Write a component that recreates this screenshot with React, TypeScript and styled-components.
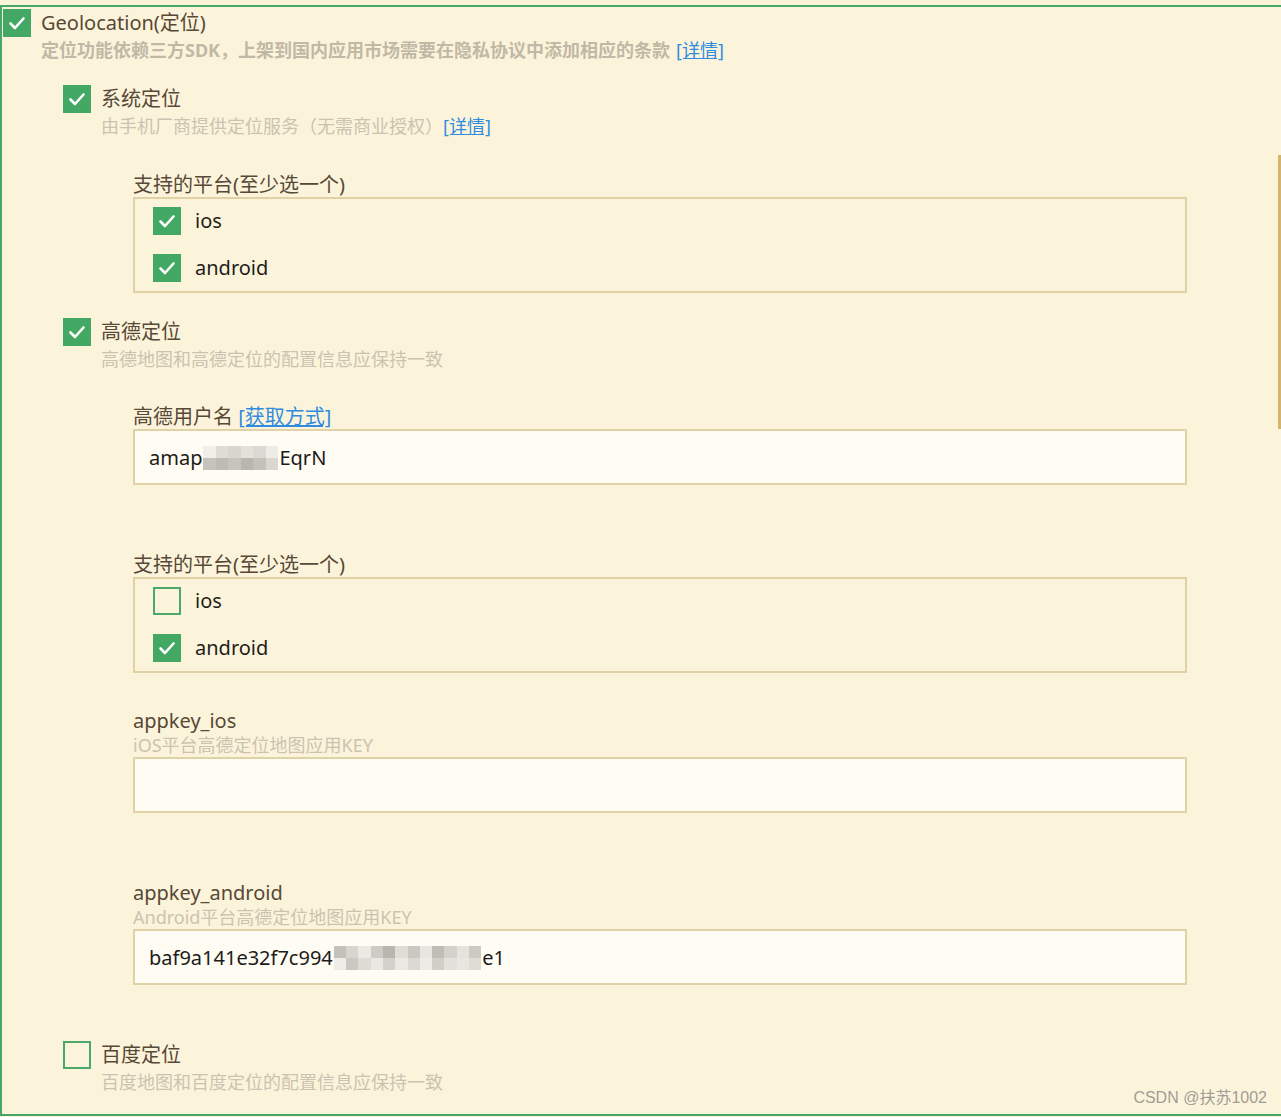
import { createGlobalStyle, styled } from "styled-components";

const GlobalStyle = createGlobalStyle`
    html, body {
        margin: 0;
        padding: 0;
        background: #fcf4da;
    }
    body {
        font-family: "Noto Sans", "Noto Sans CJK SC", sans-serif;
        color: #574838;
    }
`;

const Page = styled.div`
    position: relative;
    min-height: 1117px;
    padding-top: 5px;
    box-sizing: border-box;
    overflow: hidden;
`;

const Panel = styled.section`
    border: 2px solid #45a866;
    border-right: none;
    padding: 2px 0 19px 1px;
`;

const Option = styled.div<{ $top?: number }>`
    display: grid;
    grid-template-columns: 28px 1fr;
    column-gap: 10px;
    margin-top: ${p => p.$top ?? 0}px;
`;

const OptionBody = styled.div`
    min-width: 0;
`;

const Label = styled.div`
    font-size: 20px;
    line-height: 28px;
    color: #574838;
    white-space: nowrap;
`;

const Desc = styled.div<{ $strong?: boolean }>`
    font-size: 18px;
    line-height: 26px;
    color: ${p => p.$strong ? "#c1b8a6" : "#cbc3b1"};
    font-weight: ${p => p.$strong ? 700 : 400};
    white-space: nowrap;
`;

const More = styled.a<{ $gap?: number }>`
    color: #2f8ce0;
    text-decoration: underline;
    font-weight: 400;
    margin-left: ${p => p.$gap ?? 0}px;
    cursor: pointer;
`;

const Children = styled.div`
    margin-left: 60px;
    margin-top: 22px;
`;

const Fields = styled.div`
    width: 1054px;
    margin-left: 70px;
`;

const Field = styled.div<{ $top: number }>`
    margin-top: ${p => p.$top}px;
`;

const FieldLabel = styled.div`
    font-size: 20px;
    line-height: 24px;
    color: #574838;
    white-space: nowrap;
`;

const FieldDesc = styled.div`
    font-size: 18px;
    line-height: 24px;
    color: #cbc3b1;
    white-space: nowrap;
`;

const Group = styled.div`
    border: 2px solid #e0d2a6;
    padding: 8px 0 9px 18px;
    display: flex;
    flex-direction: column;
    gap: 19px;
`;

const Choice = styled.label`
    display: flex;
    align-items: center;
    gap: 14px;
    font-size: 20px;
    line-height: 28px;
    color: #1f1d1a;
`;

const Input = styled.div`
    box-sizing: border-box;
    height: 56px;
    border: 2px solid #e0d2a6;
    background: #fffcf3;
    padding: 0 14px;
    display: flex;
    align-items: center;
    font-size: 20px;
    color: #1d1b19;
    white-space: nowrap;
`;

const Box = styled.span<{ $checked: boolean }>`
    box-sizing: border-box;
    width: 28px;
    height: 28px;
    flex: none;
    display: inline-flex;
    align-items: center;
    justify-content: center;
    background: ${p => p.$checked ? "#43a863" : "transparent"};
    border: ${p => p.$checked ? "none" : "2px solid #4aa86a"};
`;

const Mosaic = styled.span<{ $cols: number; $w: number }>`
    display: inline-grid;
    grid-template-columns: repeat(${p => p.$cols}, ${p => p.$w}px);
    grid-auto-rows: 12px;
    margin: 0 1px;
    transform: translateY(1px);
`;

const Cell = styled.span<{ $c: string }>`
    background: ${p => p.$c};
`;

const Thumb = styled.div`
    position: absolute;
    right: 0;
    top: 155px;
    width: 3px;
    height: 274px;
    background: #d3b46c;
`;

const Mark = styled.div`
    position: absolute;
    right: 14px;
    bottom: 9px;
    font-family: "Liberation Sans", "Noto Sans CJK SC", sans-serif;
    font-size: 16px;
    color: #a09d97;
`;

function Check({ checked }: { checked: boolean }) {
    return (
        <Box $checked={checked}>
            {checked && (
                <svg width="28" height="28" viewBox="0 0 28 28">
                    <polyline points="7.5,14.5 12,19 20.5,9.5" fill="none" stroke="#fff" strokeWidth="2.6" strokeLinecap="round" strokeLinejoin="round" />
                </svg>
            )}
        </Box>
    );
}

function Blur({ rows, w }: { rows: string[][]; w: number }) {
    return (
        <Mosaic $cols={rows[0].length} $w={w}>
            {rows.flat().map((c, i) => <Cell key={i} $c={c} />)}
        </Mosaic>
    );
}

function Platforms({ ios, android, top }: { ios: boolean; android: boolean; top: number }) {
    return (
        <Field $top={top}>
            <FieldLabel>支持的平台(至少选一个)</FieldLabel>
            <Group>
                <Choice><Check checked={ios} />ios</Choice>
                <Choice><Check checked={android} />android</Choice>
            </Group>
        </Field>
    );
}

const userBlur = [
    ["#f2efe8", "#dfdcd5", "#d9d6cf", "#e4e1db", "#dcd9d3", "#eeece7"],
    ["#c6c3bd", "#bebbb5", "#c7c4be", "#b9b6b0", "#c4c1bb", "#dad7d1"],
];

const keyBlur = [
    ["#c4c1bb", "#d8d5cf", "#ebe9e4", "#cecbc5", "#b9b6b0", "#e0ddd7", "#cbc8c2", "#e8e6e1", "#c0bdb7", "#d5d2cc", "#e5e3de", "#cdcac4"],
    ["#efede8", "#cbc8c2", "#dedbd5", "#e9e8e4", "#d4d1cb", "#e9e8e3", "#dcd9d3", "#edebe6", "#d2cfc9", "#e3e1dc", "#e8e6e1", "#dfdcd6"],
];

export default function App() {
    return (
        <Page>
            <GlobalStyle />
            <Panel>
                <Option>
                    <Check checked />
                    <OptionBody>
                        <Label>Geolocation(定位)</Label>
                        <Desc $strong>
                            定位功能依赖三方SDK，上架到国内应用市场需要在隐私协议中添加相应的条款
                            <More $gap={6}>[详情]</More>
                        </Desc>
                    </OptionBody>
                </Option>
                <Children>
                    <Option>
                        <Check checked />
                        <OptionBody>
                            <Label>系统定位</Label>
                            <Desc>由手机厂商提供定位服务（无需商业授权）<More>[详情]</More></Desc>
                        </OptionBody>
                    </Option>
                    <Fields>
                        <Platforms ios android top={34} />
                    </Fields>

                    <Option $top={25}>
                        <Check checked />
                        <OptionBody>
                            <Label>高德定位</Label>
                            <Desc>高德地图和高德定位的配置信息应保持一致</Desc>
                        </OptionBody>
                    </Option>
                    <Fields>
                        <Field $top={33}>
                            <FieldLabel>高德用户名 <More>[获取方式]</More></FieldLabel>
                            <Input>amap<Blur rows={userBlur} w={12.5} />EqrN</Input>
                        </Field>
                        <Platforms ios={false} android top={68} />
                        <Field $top={36}>
                            <FieldLabel>appkey_ios</FieldLabel>
                            <FieldDesc>iOS平台高德定位地图应用KEY</FieldDesc>
                            <Input />
                        </Field>
                        <Field $top={68}>
                            <FieldLabel>appkey_android</FieldLabel>
                            <FieldDesc>Android平台高德定位地图应用KEY</FieldDesc>
                            <Input>baf9a141e32f7c994<Blur rows={keyBlur} w={12.3} />e1</Input>
                        </Field>
                    </Fields>

                    <Option $top={56}>
                        <Check checked={false} />
                        <OptionBody>
                            <Label>百度定位</Label>
                            <Desc>百度地图和百度定位的配置信息应保持一致</Desc>
                        </OptionBody>
                    </Option>
                </Children>
            </Panel>
            <Thumb />
            <Mark>CSDN @扶苏1002</Mark>
        </Page>
    );
}
